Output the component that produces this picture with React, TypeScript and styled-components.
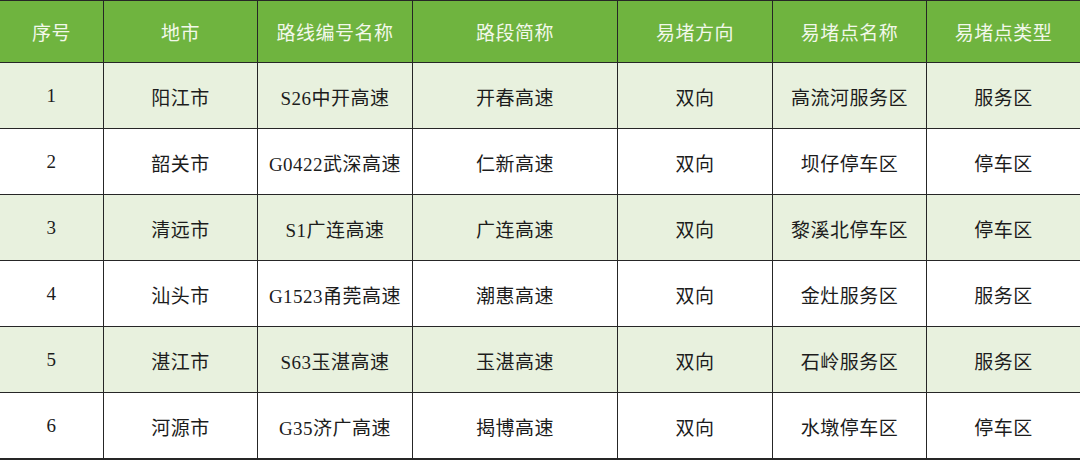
import React from 'react';
import styled, { createGlobalStyle } from 'styled-components';

const GlobalStyle = createGlobalStyle`
  html, body {
    margin: 0;
    padding: 0;
    background: #ffffff;
  }
  * {
    box-sizing: border-box;
  }
`;

const Table = styled.div`
  width: 1080px;
  display: grid;
  grid-template-columns: 104px 154px 155px 205px 155px 154px 153px;
  border-top: 1px solid #262626;
  border-bottom: 1px solid #262626;
  font-family: "Liberation Serif", "Noto Sans CJK SC", serif;
`;

const Cell = styled.div<{ $head?: boolean; $shade?: boolean; $last?: boolean }>`
  height: ${(p) => (p.$head ? '62px' : '66px')};
  display: flex;
  align-items: center;
  justify-content: center;
  border-right: ${(p) => (p.$last ? 'none' : '1px solid #262626')};
  border-bottom: 1px solid #262626;
  background: ${(p) => (p.$head ? '#6fb43f' : p.$shade ? '#e8f1de' : '#ffffff')};
  color: ${(p) => (p.$head ? '#f2f8ea' : '#1c1c1c')};
  font-size: 19px;
  letter-spacing: 0.5px;
  padding-top: ${(p) => (p.$head ? '0' : '1px')};
`;

const headers = ['序号', '地市', '路线编号名称', '路段简称', '易堵方向', '易堵点名称', '易堵点类型'];

const rows = [
  ['1', '阳江市', 'S26中开高速', '开春高速', '双向', '高流河服务区', '服务区'],
  ['2', '韶关市', 'G0422武深高速', '仁新高速', '双向', '坝仔停车区', '停车区'],
  ['3', '清远市', 'S1广连高速', '广连高速', '双向', '黎溪北停车区', '停车区'],
  ['4', '汕头市', 'G1523甬莞高速', '潮惠高速', '双向', '金灶服务区', '服务区'],
  ['5', '湛江市', 'S63玉湛高速', '玉湛高速', '双向', '石岭服务区', '服务区'],
  ['6', '河源市', 'G35济广高速', '揭博高速', '双向', '水墩停车区', '停车区'],
];

export default function App() {
  return (
    <>
      <GlobalStyle />
      <Table>
        {headers.map((h, i) => (
          <Cell key={h} $head $last={i === headers.length - 1}>
            {h}
          </Cell>
        ))}
        {rows.map((row, r) =>
          row.map((c, i) => (
            <Cell key={`${r}-${i}`} $shade={r % 2 === 0} $last={i === row.length - 1}>
              {c}
            </Cell>
          ))
        )}
      </Table>
    </>
  );
}
